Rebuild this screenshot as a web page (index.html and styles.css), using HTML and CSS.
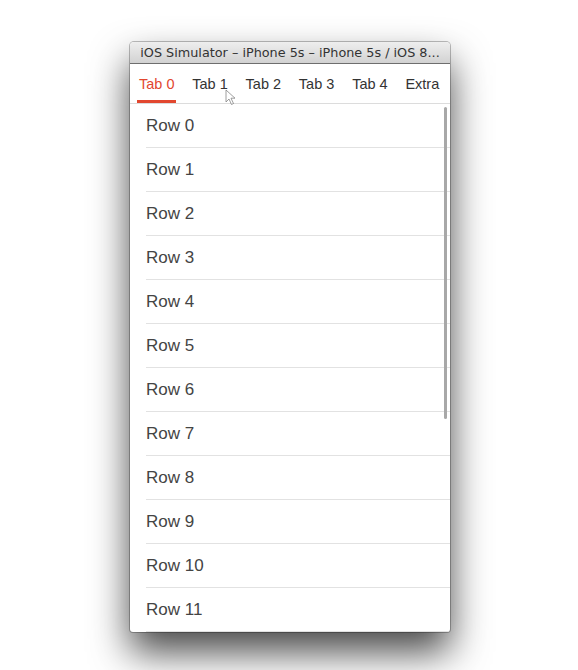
FILE: index.html
```html
<!DOCTYPE html>
<html>
<head>
<meta charset="utf-8">
<link rel="stylesheet" href="styles.css">
</head>
<body>
<div class="stage">
  <div class="window">
    <div class="titlebar"><span>iOS Simulator – iPhone 5s – iPhone 5s / iOS 8...</span></div>
    <div class="screen">
      <nav class="tabs">
        <div class="tab active">Tab 0</div>
        <div class="tab">Tab 1</div>
        <div class="tab">Tab 2</div>
        <div class="tab">Tab 3</div>
        <div class="tab">Tab 4</div>
        <div class="tab">Extra</div>
      </nav>
      <ul class="rows">
        <li>Row 0</li>
        <li>Row 1</li>
        <li>Row 2</li>
        <li>Row 3</li>
        <li>Row 4</li>
        <li>Row 5</li>
        <li>Row 6</li>
        <li>Row 7</li>
        <li>Row 8</li>
        <li>Row 9</li>
        <li>Row 10</li>
        <li>Row 11</li>
      </ul>
      <div class="scrollbar"></div>
    </div>
  </div>
  <svg class="cursor" width="12" height="17" viewBox="0 0 12 17">
    <path d="M1 1 L1 13 L4 10 L6.5 15.5 L8.5 14.5 L6 9.2 L10 9.2 Z" fill="#fff" stroke="#555" stroke-width="1" stroke-opacity="0.7" stroke-linejoin="round"/>
  </svg>
</div>
</body>
</html>
```
FILE: styles.css
```css
html, body {
  margin: 0;
  padding: 0;
  background: #fff;
}
.stage {
  position: relative;
  padding: 42px 0 0 130px;
  height: 628px;
  overflow: hidden;
}
.window {
  width: 320px;
  height: 590px;
  display: flex;
  flex-direction: column;
  border-radius: 4px 4px 3px 3px;
  overflow: hidden;
  background: #fff;
  box-shadow: 0 0 0 1px rgba(0,0,0,0.25), 0 20px 38px rgba(0,0,0,0.72);
}
.titlebar {
  height: 21px;
  flex: none;
  border-bottom: 1px solid #6e6e6e;
  background: linear-gradient(#eeeeee, #d2d2d2);
  display: flex;
  align-items: center;
  justify-content: center;
  font-family: "DejaVu Sans", sans-serif;
  font-size: 12.8px;
  color: #333;
  white-space: nowrap;
}
.screen {
  position: relative;
  flex: 1;
  display: flex;
  flex-direction: column;
  overflow: hidden;
}
.tabs {
  height: 39px;
  flex: none;
  display: flex;
  gap: 13.8px;
  padding-left: 7px;
  border-bottom: 1px solid #dcdcdc;
  font-family: "Liberation Sans", Arial, sans-serif;
  font-size: 14.5px;
  color: #333;
}
.tab {
  display: flex;
  align-items: center;
  padding: 0 2px;
  white-space: nowrap;
}
.tab.active {
  color: #e2472f;
  box-shadow: inset 0 -3px 0 #e2472f;
}
.rows {
  list-style: none;
  margin: 0;
  padding: 0;
  font-family: "Liberation Sans", Arial, sans-serif;
  font-size: 17px;
  color: #444;
}
.rows li {
  height: 43px;
  margin-left: 16px;
  border-bottom: 1px solid #e2e2e2;
  display: flex;
  align-items: center;
}
.scrollbar {
  position: absolute;
  right: 3px;
  top: 43px;
  width: 3px;
  height: 312px;
  border-radius: 2px;
  background: #a8a8a8;
}
.cursor {
  position: absolute;
  left: 225px;
  top: 89px;
  opacity: 0.8;
}
```
